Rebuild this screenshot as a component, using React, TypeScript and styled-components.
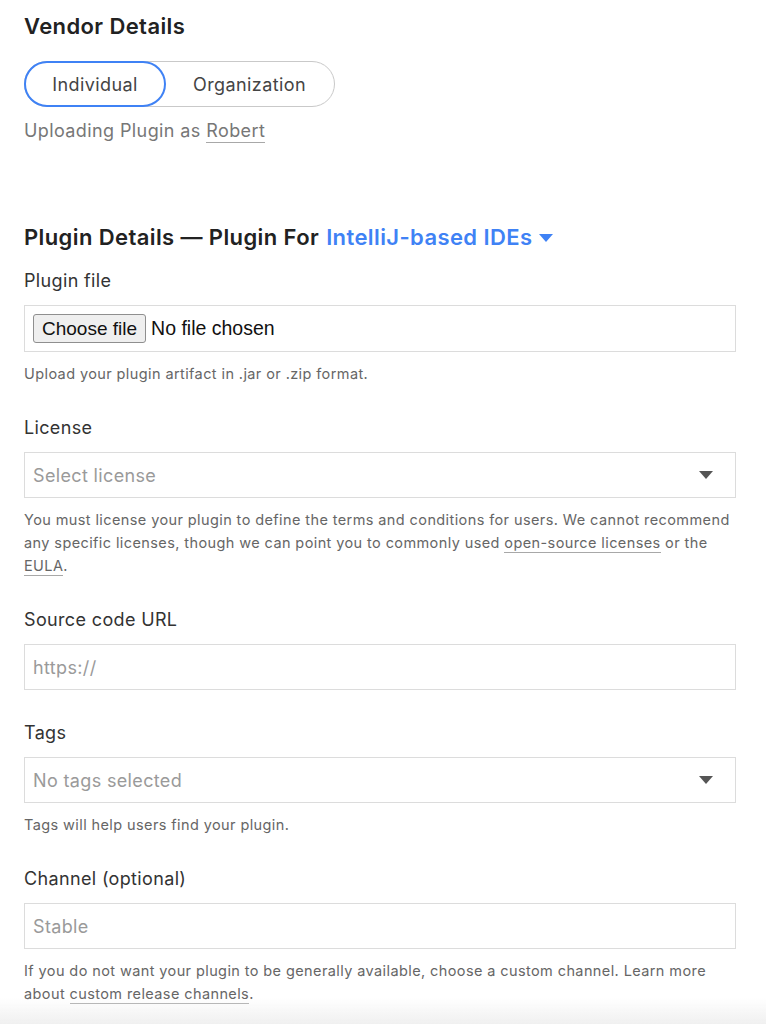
import React, { useState } from "react";
import styled, { createGlobalStyle } from "styled-components";

const GlobalStyle = createGlobalStyle`
  body {
    margin: 0;
    background: #fff;
    font-family: Inter, "Noto Sans", sans-serif;
    color: #333;
  }
`;

const Page = styled.div`
  padding: 12px 30px 60px 24px;
  box-sizing: border-box;
  width: 766px;
`;

const Heading = styled.h2<{ $top?: number }>`
  margin: ${(p) => p.$top ?? 0}px 0 0;
  font-size: 22px;
  line-height: 28px;
  letter-spacing: 0.4px;
  font-weight: 600;
  color: #222;
  display: flex;
  align-items: center;
  gap: 7px;
`;

const Accent = styled.span`
  color: #3f82f5;
  display: inline-flex;
  align-items: center;
  gap: 7px;
  cursor: pointer;
`;

const Caret = styled.span`
  width: 0;
  height: 0;
  border-left: 7px solid transparent;
  border-right: 7px solid transparent;
  border-top: 8px solid #3f82f5;
  margin-top: 1px;
`;

const Toggle = styled.div`
  margin-top: 21px;
  display: inline-flex;
  width: 311px;
  height: 46px;
  border: 1px solid #c9c9c9;
  border-radius: 23px;
  box-sizing: border-box;
`;

const ToggleOption = styled.button<{ $active?: boolean }>`
  flex: ${(p) => (p.$active ? "0 0 142px" : "1")};
  margin: -1px;
  border: 2px solid ${(p) => (p.$active ? "#3f82f5" : "transparent")};
  border-radius: 23px;
  background: transparent;
  font-family: inherit;
  font-size: 18px;
  letter-spacing: 0.4px;
  color: #444;
  cursor: pointer;
  padding: 0;
`;

const Muted = styled.div<{ $top?: number }>`
  margin-top: ${(p) => p.$top ?? 0}px;
  font-size: 18px;
  letter-spacing: 0.4px;
  line-height: 24px;
  color: #777;
`;

const Underlined = styled.a`
  color: inherit;
  text-decoration: none;
  border-bottom: 1px solid #a8a8a8;
  padding-bottom: 1px;
`;

const Field = styled.div<{ $top?: number }>`
  margin-top: ${(p) => p.$top ?? 31}px;
  display: flex;
  flex-direction: column;
`;

const Label = styled.label`
  font-size: 18px;
  letter-spacing: 0.35px;
  line-height: 24px;
  color: #333;
  margin-bottom: 12px;
`;

const Box = styled.div<{ $height?: number }>`
  height: ${(p) => p.$height ?? 46}px;
  border: 1px solid #dcdcdc;
  box-sizing: border-box;
  display: flex;
  align-items: center;
  padding: 0 22px 0 8px;
  background: #fff;
`;

const Input = styled.input`
  height: 46px;
  border: 1px solid #dcdcdc;
  box-sizing: border-box;
  padding: 0 8px;
  font-family: inherit;
  font-size: 18px;
  letter-spacing: 0.35px;
  color: #333;
  outline: none;
  &::placeholder {
    color: #9a9a9a;
  }
`;

const Placeholder = styled.span`
  flex: 1;
  font-size: 18px;
  letter-spacing: 0.35px;
  color: #9a9a9a;
`;

const SelectArrow = styled.span`
  width: 0;
  height: 0;
  border-left: 7px solid transparent;
  border-right: 7px solid transparent;
  border-top: 8px solid #555;
`;

const FileButton = styled.button`
  font-family: "Liberation Sans", Arial, sans-serif;
  font-size: 19px;
  color: #111;
  background: #efefef;
  border: 1px solid #8f8f8f;
  border-radius: 3px;
  height: 29px;
  padding: 0 8px;
  margin-right: 5px;
`;

const FileName = styled.span`
  font-family: "Liberation Sans", Arial, sans-serif;
  font-size: 19.5px;
  color: #111;
`;

const Hint = styled.p`
  margin: 10px 0 0;
  font-size: 14.5px;
  letter-spacing: 0.4px;
  line-height: 23px;
  color: #666;
`;

const BottomFade = styled.div`
  position: fixed;
  left: 0;
  right: 0;
  bottom: 0;
  height: 26px;
  background: linear-gradient(to bottom, rgba(240, 240, 240, 0), #f0f0f0);
  pointer-events: none;
`;

const Select = ({ placeholder }: { placeholder: string }) => (
  <Box>
    <Placeholder>{placeholder}</Placeholder>
    <SelectArrow />
  </Box>
);

export default function App() {
  const [vendor, setVendor] = useState<"individual" | "organization">("individual");

  return (
    <Page>
      <GlobalStyle />
      <Heading>Vendor Details</Heading>
      <Toggle>
        <ToggleOption $active={vendor === "individual"} onClick={() => setVendor("individual")}>
          Individual
        </ToggleOption>
        <ToggleOption $active={vendor === "organization"} onClick={() => setVendor("organization")}>
          Organization
        </ToggleOption>
      </Toggle>
      <Muted $top={12}>
        Uploading Plugin as <Underlined href="#">Robert</Underlined>
      </Muted>

      <Heading $top={80}>
        Plugin Details — Plugin For
        <Accent>
          IntelliJ-based IDEs
          <Caret />
        </Accent>
      </Heading>

      <Field $top={18}>
        <Label>Plugin file</Label>
        <Box $height={47}>
          <FileButton>Choose file</FileButton>
          <FileName>No file chosen</FileName>
        </Box>
        <Hint>Upload your plugin artifact in .jar or .zip format.</Hint>
      </Field>

      <Field>
        <Label>License</Label>
        <Select placeholder="Select license" />
        <Hint>
          You must license your plugin to define the terms and conditions for users. We cannot recommend any
          specific licenses, though we can point you to commonly used{" "}
          <Underlined href="#">open-source licenses</Underlined> or the <Underlined href="#">EULA</Underlined>.
        </Hint>
      </Field>

      <Field>
        <Label>Source code URL</Label>
        <Input placeholder="https://" />
      </Field>

      <Field>
        <Label>Tags</Label>
        <Select placeholder="No tags selected" />
        <Hint>Tags will help users find your plugin.</Hint>
      </Field>

      <Field>
        <Label>Channel (optional)</Label>
        <Input placeholder="Stable" />
        <Hint>
          If you do not want your plugin to be generally available, choose a custom channel. Learn more about{" "}
          <Underlined href="#">custom release channels</Underlined>.
        </Hint>
      </Field>
      <BottomFade />
    </Page>
  );
}
